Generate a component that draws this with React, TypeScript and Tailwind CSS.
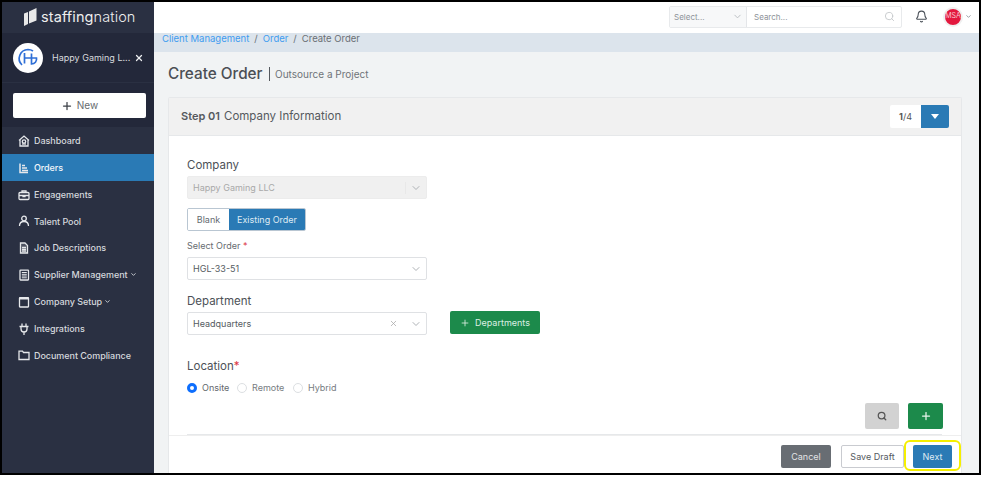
import { Bell, ChevronDown, Search, Plus, X } from "lucide-react";

const s = { fill: "none", stroke: "currentColor", strokeWidth: 1.3 };
const nav = [
  { label: "Dashboard", icon: <svg width="12" height="12" viewBox="0 0 12 12" {...s}><path d="M1 5.500 6 1l5 4.500M2 4.500V11h8V4.500" /><circle cx="6" cy="6.500" r="1.700" /><path d="M4 9h4" /></svg> },
  { label: "Orders", active: true, icon: <svg width="12" height="12" viewBox="0 0 12 12" fill="none" stroke="currentColor" strokeWidth="1.5"><path d="M2 1.500v9h8M4 3.500h3M4 6h5M4 8.500h6" /></svg> },
  { label: "Engagements", icon: <svg width="12" height="12" viewBox="0 0 12 12" {...s}><rect x="1" y="3.500" width="10" height="7" rx="1" /><path d="M4 3.500V2h4v1.500M1 6.500h10M5 6.500v1h2v-1" /></svg> },
  { label: "Talent Pool", icon: <svg width="12" height="12" viewBox="0 0 12 12" {...s}><circle cx="6" cy="3.500" r="2.300" /><path d="M1.500 11c0-3 2-4.500 4.500-4.500s4.500 1.500 4.500 4.500" /></svg> },
  { label: "Job Descriptions", icon: <svg width="12" height="12" viewBox="0 0 12 12" {...s}><path d="M2.500 1h4.500l2.500 2.500V11h-7z" fill="currentColor" fillOpacity=".2" /><path d="M4 5.500h4M4 7.300h4M4 9h4" /></svg> },
  { label: "Supplier Management", chevron: true, icon: <svg width="12" height="12" viewBox="0 0 12 12" {...s}><rect x="2" y="1.200" width="8.500" height="9.800" rx=".5" /><path d="M3.800 3.500h5M3.800 5.300h5M3.800 7h5M3.800 8.800h5" strokeWidth="1" /></svg> },
  { label: "Company Setup", chevron: true, icon: <svg width="12" height="12" viewBox="0 0 12 12" {...s}><rect x="1.500" y="1.700" width="9" height="9.300" rx=".5" /><path d="M1.500 2.500h9" strokeWidth="2" /></svg> },
  { label: "Integrations", icon: <svg width="12" height="12" viewBox="0 0 12 12" {...s}><path d="M4 .5v3M8 .5v3M1.500 3.500h9M3 3.500v2.500a3 3 0 0 0 6 0V3.500M6 9v3" /></svg> },
  { label: "Document Compliance", icon: <svg width="12" height="12" viewBox="0 0 12 12" {...s}><path d="M1 2.200h3.500l1 1.300H11V10.500H1z" /></svg> },
];

function Field({ value, disabled, clear }: { value: string; disabled?: boolean; clear?: boolean }) {
  return (
    <div className={`w-[240px] h-[23px] flex items-center pl-[5px] pr-[3px] rounded-[2px] border text-[9px] ${disabled ? "bg-[#f0f0f0] border-[#ececec] text-[#a9a9a9]" : "bg-white border-[#dfe1e4] text-[#555b61]"}`}>
      <span className="flex-1">{value}</span>
      {clear && <X size={9} className="text-[#a8a8a8] mr-[12px]" />}
      {disabled && <span className="w-px h-[12px] bg-[#e8e8e8] mr-[4px]" />}
      <ChevronDown size={12} className="text-[#aeb2b6] mr-[1px]" />
    </div>
  );
}

function Radio({ label, on, w }: { label: string; on?: boolean; w: string }) {
  return (
    <div className={`flex items-center gap-[5px] ${w}`}>
      <span className={`w-[10px] h-[10px] rounded-full ${on ? "border-[3px] border-[#0d6efd] bg-white" : "border border-[#dcdfe2] bg-white"}`} />
      <span className={`text-[9px] ${on ? "text-[#62676c]" : "text-[#777c81]"}`}>{label}</span>
    </div>
  );
}

export default function App() {
  return (
    <div className="w-[981px] h-[477px] bg-white overflow-hidden" style={{ fontFamily: "Inter, 'Liberation Sans', sans-serif" }}>
      <div className="w-[981px] h-[475px] border-2 border-black flex overflow-hidden">
        <aside className="w-[152px] shrink-0 bg-[#2a3042] flex flex-col text-[#e4e6ea]">
          <div className="h-[31px] flex items-center pl-[22px] gap-[4px]">
            <svg width="13" height="19" viewBox="0 0 13 19" fill="#e8e8e8"><path d="M0 5.500 L4 4 L4 16 L0 18Z M5 3.500 L12.500 0 L12.500 12.500 L5 15.500Z" /></svg>
            <span className="text-[14.500px] leading-none text-[#eeeeee] tracking-[0.1px]"><span className="font-normal">staffing</span><span className="font-light">nation</span></span>
          </div>
          <div className="h-[49px] bg-[#23283a] flex items-center pl-[11px]">
            <span className="w-[30px] h-[30px] rounded-full bg-white flex items-center justify-center">
              <svg width="24" height="24" viewBox="0 0 24 24" fill="none" stroke="#2f6fd6" strokeWidth="1.700"><path d="M6 19A9 9 0 0 1 12 3.500C14.500 3.500 16 4.300 17 5M8.500 7v10.500M8.500 12h7.500M15.500 7.500v10.500a5 5 0 0 0 5-6h-5" /></svg>
            </span>
            <span className="ml-[9px] text-[9px] w-[82px] text-[#d8dade] whitespace-nowrap">Happy Gaming L...</span>
            <X size={10} strokeWidth={3} className="text-[#eceef0]" />
          </div>
          <div className="h-[45px] bg-[#23283a] border-t border-[#2a3042] pt-[10px] pl-[11px]">
            <div className="w-[133px] h-[25px] bg-white rounded-[2px] flex items-center justify-center gap-[4px] text-[#666b70] text-[10px]">
              <Plus size={12} strokeWidth={2.5} className="text-[#3a3f46]" />
              New
            </div>
          </div>
          <nav className="flex flex-col pt-[0.600px]">
            {nav.map((n) => (
              <div key={n.label} className={`h-[26.800px] flex items-center pl-[16px] gap-[4px] text-[9px] font-medium ${n.active ? "bg-[#2a7ab5] text-[#f2f6fa]" : "text-[#d5d8dd]"}`}>
                <span className="w-[12px] flex justify-center text-[#e6e8eb]">{n.icon}</span>
                <span className="whitespace-nowrap tracking-[-0.05px]">{n.label}</span>
                {n.chevron && <ChevronDown size={7} strokeWidth={3} className="-ml-[2px]" />}
              </div>
            ))}
          </nav>
        </aside>

        <div className="flex-1 min-w-0 flex flex-col bg-[#f1f3f4]">
          <header className="h-[31px] shrink-0 bg-white flex items-center justify-end pr-[7px]">
            <div className="w-[233px] h-[22px] flex border border-[#e8eaec] rounded-[2px] mr-[13px] -mt-[2px]">
              <div className="w-[77px] bg-[#f7f8f9] border-r border-[#e4e6e9] flex items-center pl-[4px] pr-[3px] text-[8px] text-[#8d9298]">
                <span className="flex-1">Select...</span>
                <ChevronDown size={11} className="text-[#b8bcc0]" />
              </div>
              <div className="flex-1 flex items-center pl-[7px] pr-[6px] text-[8px] text-[#8d9298]">
                <span className="flex-1">Search...</span>
                <Search size={11} className="text-[#c5c8cb]" />
              </div>
            </div>
            <Bell size={13} className="text-[#4a5058] mr-[15px] -mt-[2px]" />
            <span className="w-[20px] h-[20px] -mt-[2px] rounded-full border-[2px] border-[#f0f0f0] bg-[#e3173e] flex items-center justify-center text-[7px] text-[#f7c6cf] whitespace-nowrap">MSA</span>
            <ChevronDown size={7} strokeWidth={3} className="text-[#8d9298] ml-[2px] -mt-[2px]" />
          </header>

          <div className="h-[19px] shrink-0 bg-[#dce4ec] pl-[8px] flex items-start text-[9.500px] leading-[11px] text-[#6b7075] gap-[5px]">
            <span className="text-[#3f9cf0]">Client Management</span><span>/</span>
            <span className="text-[#3f9cf0]">Order</span><span>/</span>
            <span>Create Order</span>
          </div>

          <main className="flex-1 min-h-0 flex flex-col pl-[14px] pr-[17px] pt-[13px]">
            <div className="h-[32px] shrink-0 flex items-start gap-[5px] text-[#4b4f55]">
              <span className="text-[15.300px] leading-[18px] font-medium">Create Order</span>
              <span className="w-[1.500px] h-[14px] mt-[2px] bg-[#55595e] ml-[1px]" />
              <span className="text-[10px] leading-[19px] text-[#6f7479]">Outsource a Project</span>
            </div>

            <section className="flex-1 min-h-0 bg-white border border-b-0 border-[#e6e8ea] rounded-t-[2px] flex flex-col">
              <div className="h-[38px] shrink-0 bg-[#f1f1f1] border-b border-[#e6e8ea] flex items-center pl-[12px] pr-[12px] text-[11.500px] text-[#55595e]">
                <span className="font-semibold mr-[4px] text-[11px]">Step 01</span>
                <span className="flex-1">Company Information</span>
                <span className="w-[31px] h-[23px] bg-white rounded-l-[2px] flex items-center justify-center text-[9px] text-[#555]"><b className="font-bold">1</b>/4</span>
                <span className="w-[28px] h-[23px] bg-[#2a7ab5] rounded-r-[2px] flex items-center justify-center">
                  <svg width="8" height="5" viewBox="0 0 8 5" fill="white"><path d="M0 0h8L4 5z" /></svg>
                </span>
              </div>

              <div className="flex-1 min-h-0 relative pl-[18px] pt-[21px]">
                <div className="text-[11.500px] leading-[16px] text-[#4d5157] font-normal mb-[3px]">Company</div>
                <Field value="Happy Gaming LLC" disabled />
                <div className="flex mt-[9px] w-fit h-[23px] text-[9px] rounded-[2px] overflow-hidden border border-[#b9c6d2]">
                  <span className="w-[41px] bg-white flex items-center justify-center text-[#666b70]">Blank</span>
                  <span className="w-[76px] bg-[#2a7ab5] flex items-center justify-center text-[#dfeaf3]">Existing Order</span>
                </div>
                <div className="mt-[9px] text-[9px] leading-[12px] text-[#666b70]">Select Order <span className="text-[#dc3545]">*</span></div>
                <div className="mt-[5px]"><Field value="HGL-33-51" /></div>
                <div className="mt-[13px] text-[11.500px] leading-[16px] text-[#4d5157] font-normal mb-[3px]">Department</div>
                <div className="flex items-start gap-[23px]">
                  <Field value="Headquarters" clear />
                  <div className="w-[90px] h-[23px] -mt-[1px] bg-[#1c8a4b] rounded-[2px] flex items-center justify-center gap-[5px] text-[9px] text-[#dcefe3]">
                    <Plus size={10} />Departments
                  </div>
                </div>
                <div className="mt-[23px] text-[11.500px] leading-[16px] text-[#4d5157] font-normal">Location<span className="text-[#dc3545]">*</span></div>
                <div className="flex mt-[7px]">
                  <Radio label="Onsite" on w="w-[50px]" />
                  <Radio label="Remote" w="w-[56px]" />
                  <Radio label="Hybrid" w="w-[60px]" />
                </div>
                <div className="absolute top-[267px] right-[18px] flex gap-[9px]">
                  <span className="w-[34px] h-[26px] bg-[#d2d2d2] rounded-[2px] flex items-center justify-center"><Search size={10} strokeWidth={3} className="text-[#555]" /></span>
                  <span className="w-[35px] h-[26px] bg-[#1c8a4b] rounded-[2px] flex items-center justify-center"><Plus size={12} strokeWidth={2.500} className="text-[#e8f4ec]" /></span>
                </div>
                <div className="absolute left-[18px] right-[19px] top-[298px] h-px bg-[#e6e8ea]" />
                <div className="absolute left-0 right-0 top-[299px] h-px bg-[#eeeeee]" />
                <div className="absolute right-[9px] top-[309px] flex items-center">
                  <span className="w-[50px] h-[23px] bg-[#686d73] rounded-[2px] flex items-center justify-center text-[9px] text-[#e3e4e5] mr-[10px]">Cancel</span>
                  <span className="w-[63px] h-[23px] bg-white border border-[#c9cbd0] rounded-[2px] flex items-center justify-center text-[9px] text-[#555a5f] mr-[9px]">Save Draft</span>
                  <span className="w-[39px] h-[23px] bg-[#2a7ab5] rounded-[2px] flex items-center justify-center text-[9px] text-[#dfeaf3]">Next</span>
                </div>
                <div className="absolute right-[0px] top-[304px] w-[57px] h-[31px] border-2 border-[#f5ef00] rounded-[6px]" />
              </div>
            </section>
          </main>
        </div>
      </div>
    </div>
  );
}
